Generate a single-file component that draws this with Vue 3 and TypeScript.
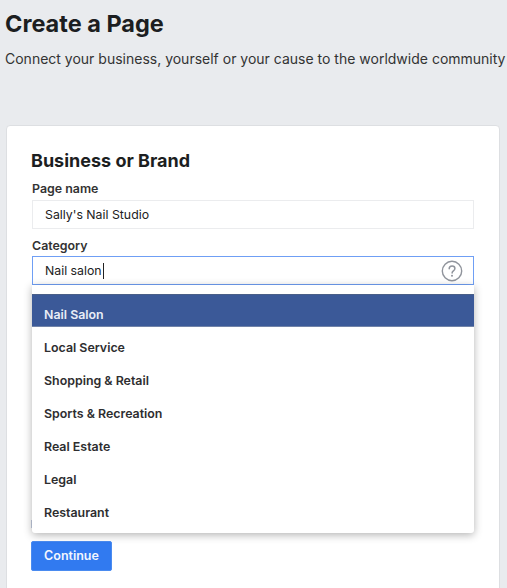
<script setup lang="ts">
const items: string[] = ['Nail Salon', 'Local Service', 'Shopping & Retail', 'Sports & Recreation', 'Real Estate', 'Legal', 'Restaurant']
</script>

<template>
  <div class="page">
    <h1 class="title">Create a Page</h1>
    <p class="subtitle">Connect your business, yourself or your cause to the worldwide community</p>
    <section class="card">
      <h2 class="card-title">Business or Brand</h2>
      <div class="label">Page name</div>
      <div class="input">Sally's Nail Studio</div>
      <div class="label second">Category</div>
      <div class="combo">
        <div class="input focused">
          <span class="typed">Nail salon</span>
          <svg class="help" width="22" height="22" viewBox="0 0 22 22" fill="none">
            <circle cx="11" cy="11" r="9.7" stroke="#90949c" stroke-width="1.4" />
            <path d="M8.2 8.8c0-1.7 1.2-2.8 2.9-2.8s2.8 1 2.8 2.5c0 1.2-.7 1.8-1.5 2.4-.8.6-1.3 1-1.3 2" stroke="#90949c" stroke-width="1.5" stroke-linecap="round" />
            <circle cx="11" cy="15.8" r="1" fill="#90949c" />
          </svg>
        </div>
        <ul class="menu">
          <li v-for="(item, i) in items" :key="item" class="item" :class="{ active: i === 0 }">{{ item }}</li>
        </ul>
      </div>
      <div class="hidden-fields">
        <div class="ghost-field"></div>
      </div>
      <button class="continue" type="button">Continue</button>
    </section>
  </div>
</template>

<style scoped>
.page {
  height: 588px;
  box-sizing: border-box;
  padding: 10px 7px 0 6px;
  background: #e9ebee;
  overflow: hidden;
  font-family: Inter, "Liberation Sans", sans-serif;
  color: #1c1e21;
}
.title {
  margin: 0 0 0 -1px;
  font-size: 23.5px;
  line-height: 28px;
  font-weight: 700;
}
.subtitle {
  margin: 10px 0 0 -1px;
  font-size: 14px;
  line-height: 22px;
  white-space: nowrap;
  color: #333;
}
.card {
  margin-top: 55px;
  height: 480px;
  box-sizing: border-box;
  padding: 24px 25px 0 24px;
  background: #fff;
  border: 1px solid #dddfe2;
  border-radius: 4px;
}
.card-title {
  margin: 0;
  font-size: 18px;
  line-height: 22px;
  font-weight: 700;
}
.label {
  margin: 9px 0 0 1px;
  font-size: 12.4px;
  line-height: 15px;
  font-weight: 600;
  color: #333;
}
.label.second {
  margin-top: 9px;
}
.input {
  display: flex;
  align-items: center;
  justify-content: space-between;
  box-sizing: border-box;
  height: 29px;
  margin: 4px 0 0 1px;
  padding: 0 10px 0 12px;
  border: 1.5px solid #ebecee;
  font-size: 12.3px;
  color: #222;
  background: #fff;
}
.combo {
  position: relative;
}
.input.focused {
  margin-top: 3px;
  border-color: #6f9ff5;
}
.typed {
  border-right: 1px solid #222;
  line-height: 16px;
  padding-right: 1px;
}
.help {
  display: block;
}
.menu {
  position: absolute;
  z-index: 2;
  top: 29px;
  left: 1px;
  right: 0;
  margin: 0;
  padding: 9px 0 8px;
  list-style: none;
  background: #fff;
  border-radius: 0 0 3px 3px;
  box-shadow: 0 2px 9px rgba(0, 0, 0, 0.3);
}
.item {
  height: 33px;
  display: flex;
  align-items: center;
  padding: 7px 12px 0;
  box-sizing: border-box;
  font-size: 12.4px;
  font-weight: 600;
  color: #2e2e30;
}
.item.active {
  background: #3b5998;
  border-top: 1px solid #4a5f88;
  border-bottom: 1px solid #7183a8;
  color: #e9edf6;
}
.hidden-fields {
  height: 256px;
  position: relative;
}
.ghost-field {
  position: absolute;
  left: 0;
  top: 235px;
  width: 2px;
  height: 8px;
  background: #c3cde0;
}
.continue {
  display: block;
  width: 81px;
  height: 30px;
  padding: 0 0 1px;
  border: 1px solid #4a8bf0;
  border-radius: 2px;
  background: #317af0;
  color: #f2f6fe;
  font-family: inherit;
  font-size: 12.5px;
  font-weight: 600;
}
</style>

<style>
html, body { margin: 0; background: #e9ebee; }
</style>
